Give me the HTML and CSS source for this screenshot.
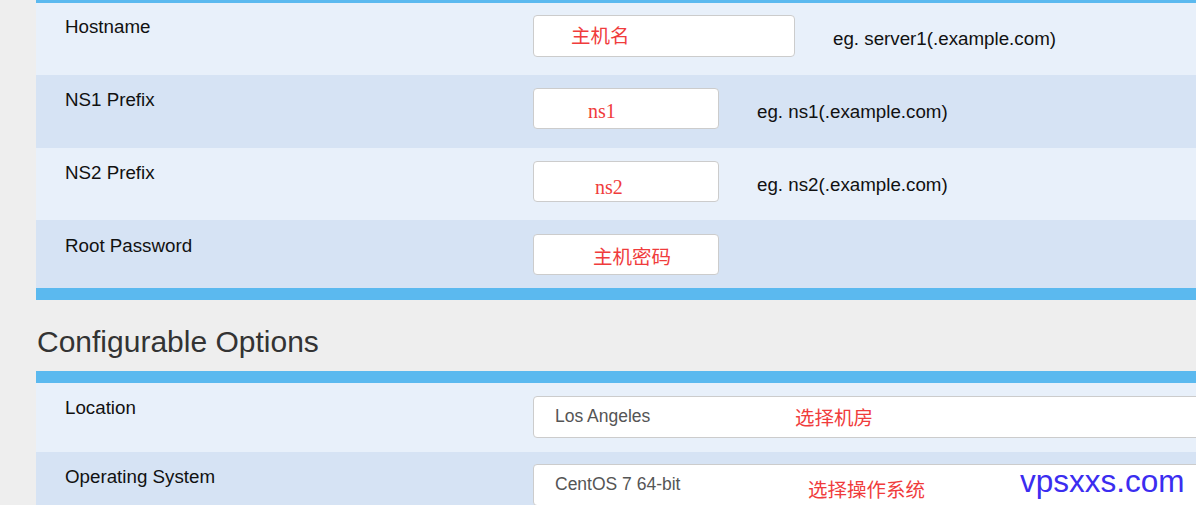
FILE: index.html
```html
<!DOCTYPE html>
<html lang="zh-CN">
<head>
<meta charset="utf-8">
<title>Configure</title>
<link rel="stylesheet" href="styles.css">
</head>
<body>
<div class="page">
  <section class="panel panel-first">
    <div class="row row-light row-first">
      <div class="label">Hostname</div>
      <div class="field field-wide"><span class="note note-host">主机名</span></div>
      <div class="hint">eg. server1(.example.com)</div>
    </div>
    <div class="row row-dark row-tall">
      <div class="label">NS1 Prefix</div>
      <div class="field"><span class="note note-latin note-ns1">ns1</span></div>
      <div class="hint">eg. ns1(.example.com)</div>
    </div>
    <div class="row row-light">
      <div class="label">NS2 Prefix</div>
      <div class="field"><span class="note note-latin note-ns2">ns2</span></div>
      <div class="hint">eg. ns2(.example.com)</div>
    </div>
    <div class="row row-dark row-last">
      <div class="label">Root Password</div>
      <div class="field"><span class="note note-pass">主机密码</span></div>
    </div>
  </section>

  <h2 class="heading">Configurable Options</h2>

  <section class="panel">
    <div class="row row-light row-opt">
      <div class="label">Location</div>
      <div class="select">
        <span class="select-value">Los Angeles</span>
        <span class="note select-note note-loc">选择机房</span>
      </div>
    </div>
    <div class="row row-dark row-opt row-os">
      <div class="label">Operating System</div>
      <div class="select">
        <span class="select-value">CentOS 7 64-bit</span>
        <span class="note select-note note-os">选择操作系统</span>
      </div>
    </div>
  </section>

  <div class="watermark">vpsxxs.com</div>
</div>
</body>
</html>
```

FILE: styles.css
```css
html, body {
  margin: 0;
  padding: 0;
}

body {
  background: #eeeeee;
  font-family: "Liberation Sans", Arial, sans-serif;
  color: #111;
  overflow: hidden;
  width: 1196px;
  height: 505px;
}

.page {
  position: relative;
  padding-left: 36px;
  width: 1200px;
}

.panel {
  border-top: 12px solid #5bb9ef;
}

.panel-first {
  margin-top: -9px;
  border-bottom: 12px solid #5bb9ef;
}

.row {
  display: flex;
  align-items: flex-start;
  padding: 13px 0 18px 29px;
}

.row-light {
  background: #e8f0fa;
}

.row-dark {
  background: #d6e3f4;
}

.row-first {
  padding-top: 12px;
}

.row-tall {
  padding-bottom: 19px;
}

.row-last {
  padding-top: 14px;
  padding-bottom: 13px;
}

.row-opt {
  padding-top: 13px;
  padding-bottom: 14px;
}

.row-os {
  padding-top: 12px;
}

.label {
  width: 468px;
  flex: none;
  font-size: 18.75px;
  line-height: 22px;
  color: #111;
  margin-top: 1px;
}

.row-os .label {
  margin-top: 2px;
}

.field {
  box-sizing: border-box;
  width: 186px;
  height: 41px;
  flex: none;
  background: #fff;
  border: 1px solid #cccccc;
  border-radius: 4px;
  display: flex;
  align-items: center;
}

.field-wide {
  width: 262px;
  height: 42px;
}

.note {
  color: #f03c3c;
  font-family: "Noto Sans CJK SC", sans-serif;
  font-size: 19.5px;
  line-height: 24px;
  white-space: nowrap;
}

.note-latin {
  font-family: "Liberation Serif", serif;
  font-size: 20px;
}

.note-host {
  margin-left: 37px;
  margin-top: -2px;
}

.note-ns1 {
  margin-left: 54px;
  margin-top: 5px;
}

.note-ns2 {
  margin-left: 61px;
  margin-top: 11px;
}

.note-pass {
  margin-left: 59px;
  margin-top: 3px;
}

.hint {
  margin-left: 38px;
  padding-top: 6px;
  font-size: 18.75px;
  line-height: 35px;
  color: #111;
  white-space: nowrap;
}

.heading {
  margin: 25px 0 13px 1px;
  font-size: 30px;
  line-height: 33px;
  font-weight: normal;
  color: #333;
}

.select {
  position: relative;
  box-sizing: border-box;
  width: 720px;
  height: 42px;
  flex: none;
  background: #fff;
  border: 1px solid #cccccc;
  border-radius: 4px;
  display: flex;
  align-items: center;
  padding-left: 21px;
}

.select-value {
  font-size: 17.5px;
  color: #555;
  margin-top: -2px;
}

.select-note {
  position: absolute;
  top: 8px;
}

.note-loc {
  left: 261px;
}

.note-os {
  left: 274px;
  top: 12px;
}

.watermark {
  position: absolute;
  left: 1020px;
  top: 475px;
  font-size: 31.5px;
  line-height: 1;
  color: #3b2df0;
  white-space: nowrap;
}
```
